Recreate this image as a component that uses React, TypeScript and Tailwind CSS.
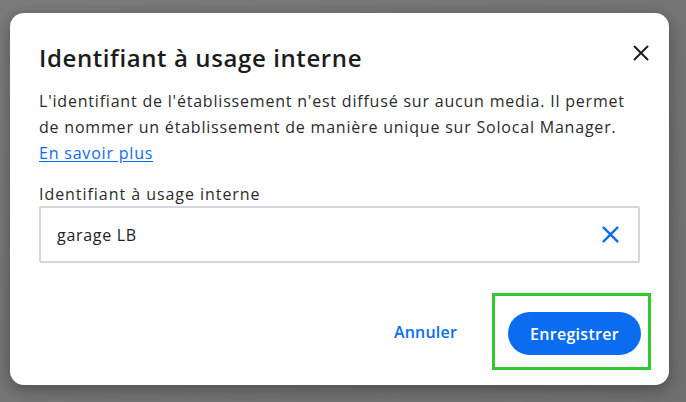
const font = { fontFamily: '"Open Sans", "Noto Sans", sans-serif' };

function Cross({ className, stroke }: { className?: string; stroke: number }) {
  return (
    <svg viewBox="0 0 16 16" className={className} fill="none" stroke="currentColor" strokeWidth={stroke} strokeLinecap="round">
      <path d="M1.5 1.5 L14.5 14.5 M14.5 1.5 L1.5 14.5" />
    </svg>
  );
}

export default function App() {
  return (
    <div
      className="min-h-[402px] w-[686px] bg-gradient-to-br from-[#7b7b7b] to-[#6f6f6f] pl-[10px] pt-[13px]"
      style={font}
    >
      <div className="relative w-[659px] h-[372px] rounded-[14px] bg-white shadow-[0_4px_16px_rgba(0,0,0,0.35)]">
        {/* Close */}
        <button className="absolute right-[20px] top-[32px] text-[#1f1f1f]">
          <Cross className="h-[16px] w-[16px]" stroke={2} />
        </button>

        <div className="px-[29px] pt-[29px]">
          <h2 className="text-[24px] font-semibold leading-[32px] tracking-[0.6px] text-[#1c1c1c]">
            Identifiant à usage interne
          </h2>

          <p className="mt-[14px] text-[16px] leading-[26px] tracking-[0.8px] text-[#2b2b2b]">
            L'identifiant de l'établissement n'est diffusé sur aucun media. Il permet de nommer un
            établissement de manière unique sur Solocal Manager.
            <br />
            <a href="#" className="text-[#0b6cf0] underline underline-offset-2">
              En savoir plus
            </a>
          </p>

          <label className="mt-[16px] block text-[16px] leading-[24px] tracking-[0.95px] text-[#2b2b2b]">
            Identifiant à usage interne
          </label>
          <div className="mt-0 flex h-[57px] items-center justify-between rounded-[2px] border-2 border-[#d6d6de] pl-[16px] pr-[19px]">
            <span className="text-[16px] tracking-[0.7px] text-[#222]">garage LB</span>
            <Cross className="h-[17px] w-[17px] text-[#0b6cf0]" stroke={2.2} />
          </div>
        </div>

        {/* Footer */}
        <div className="mt-[30px] flex items-center justify-end pr-[18px]">
          <button className="mr-[35px] text-[16px] font-semibold tracking-[0.2px] text-[#0b6cf0]">Annuler</button>
          <div className="border-[3px] border-[#2dcb2d] pb-[12px] pl-[13px] pr-[7px] pt-[16px]">
            <button className="flex h-[43px] w-[133px] items-center justify-center rounded-full bg-[#0b6cf0] text-[16px] font-semibold tracking-[0.3px] text-white">
              Enregistrer
            </button>
          </div>
        </div>
      </div>
    </div>
  );
}
